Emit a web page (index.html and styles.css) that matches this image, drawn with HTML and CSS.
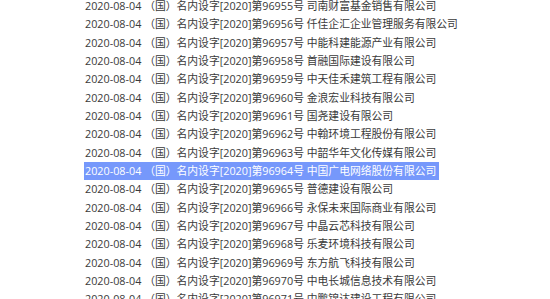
FILE: index.html
```html
<!DOCTYPE html>
<html lang="zh-CN">
<head>
<meta charset="utf-8">
<link rel="stylesheet" href="styles.css">
</head>
<body>
<ul class="list">
<li class="row">2020-08-04 （国）名内设字[2020]第96955号 司南财富基金销售有限公司</li>
<li class="row">2020-08-04 （国）名内设字[2020]第96956号 仟佳企汇企业管理服务有限公司</li>
<li class="row">2020-08-04 （国）名内设字[2020]第96957号 中能科建能源产业有限公司</li>
<li class="row">2020-08-04 （国）名内设字[2020]第96958号 首融国际建设有限公司</li>
<li class="row">2020-08-04 （国）名内设字[2020]第96959号 中天佳禾建筑工程有限公司</li>
<li class="row">2020-08-04 （国）名内设字[2020]第96960号 金浪宏业科技有限公司</li>
<li class="row">2020-08-04 （国）名内设字[2020]第96961号 国尧建设有限公司</li>
<li class="row">2020-08-04 （国）名内设字[2020]第96962号 中翰环境工程股份有限公司</li>
<li class="row">2020-08-04 （国）名内设字[2020]第96963号 中韶华年文化传媒有限公司</li>
<li class="row selected">2020-08-04 （国）名内设字[2020]第96964号 中国广电网络股份有限公司</li>
<li class="row">2020-08-04 （国）名内设字[2020]第96965号 普德建设有限公司</li>
<li class="row">2020-08-04 （国）名内设字[2020]第96966号 永保未来国际商业有限公司</li>
<li class="row">2020-08-04 （国）名内设字[2020]第96967号 中晶云芯科技有限公司</li>
<li class="row">2020-08-04 （国）名内设字[2020]第96968号 乐麦环境科技有限公司</li>
<li class="row">2020-08-04 （国）名内设字[2020]第96969号 东方航飞科技有限公司</li>
<li class="row">2020-08-04 （国）名内设字[2020]第96970号 中电长城信息技术有限公司</li>
<li class="row">2020-08-04 （国）名内设字[2020]第96971号 中鹏锦达建设工程有限公司</li>
</ul>
</body>
</html>
```
FILE: styles.css
```css
html, body {
  margin: 0;
  padding: 0;
  background: #ffffff;
  overflow: hidden;
}
.list {
  list-style: none;
  margin: -3px 0 0 0;
  padding: 0 0 0 84px;
  font-family: "Open Sans", "Noto Sans CJK SC", sans-serif;
  font-size: 10.8px;
  line-height: 18.33px;
  color: #3a3a3a;
}
.row {
  display: block;
  width: fit-content;
  padding: 0 0 0 1px;
  white-space: nowrap;
}
.row.selected {
  background: #7698fb;
  color: #ffffff;
  padding-right: 3px;
}
```
